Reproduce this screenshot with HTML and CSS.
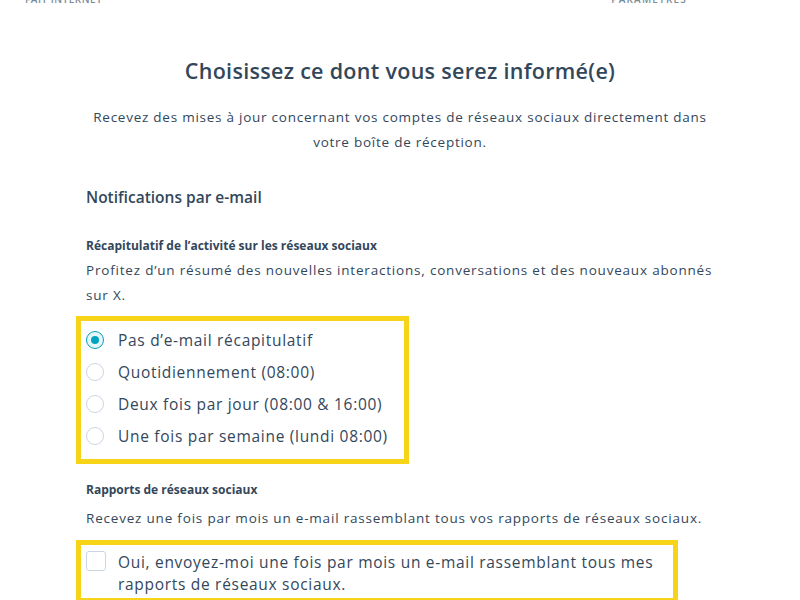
FILE: index.html
```html
<!DOCTYPE html>
<html lang="fr">
<head>
<meta charset="utf-8">
<title>Notifications</title>
<link rel="stylesheet" href="styles.css">
</head>
<body>
<header class="topbar">
  <span class="topbar-item">FAIT INTERNET</span>
  <span class="topbar-item topbar-right">PARAMÈTRES</span>
</header>
<main class="page">
  <h1 class="title">Choisissez ce dont vous serez informé(e)</h1>
  <p class="intro">Recevez des mises à jour concernant vos comptes de réseaux sociaux directement dans votre boîte de réception.</p>

  <h2 class="section-title">Notifications par e-mail</h2>

  <h3 class="group-title">Récapitulatif de l’activité sur les réseaux sociaux</h3>
  <p class="group-desc">Profitez d’un résumé des nouvelles interactions, conversations et des nouveaux abonnés sur X.</p>

  <div class="highlight radio-box">
    <label class="option"><span class="radio checked"></span><span>Pas d’e-mail récapitulatif</span></label>
    <label class="option"><span class="radio"></span><span>Quotidiennement (08:00)</span></label>
    <label class="option"><span class="radio"></span><span>Deux fois par jour (08:00 &amp; 16:00)</span></label>
    <label class="option"><span class="radio"></span><span>Une fois par semaine (lundi 08:00)</span></label>
  </div>

  <h3 class="group-title reports">Rapports de réseaux sociaux</h3>
  <p class="group-desc single">Recevez une fois par mois un e-mail rassemblant tous vos rapports de réseaux sociaux.</p>

  <div class="highlight check-box">
    <label class="check-option"><span class="checkbox"></span><span class="check-text">Oui, envoyez-moi une fois par mois un e-mail rassemblant tous mes rapports de réseaux sociaux.</span></label>
  </div>
</main>
</body>
</html>
```
FILE: styles.css
```css
* { box-sizing: border-box; }
html, body { margin: 0; padding: 0; background: #ffffff; }
body {
  font-family: "Open Sans", "Noto Sans", sans-serif;
  color: #33475b;
  overflow: hidden;
  height: 600px;
}
.topbar {
  height: 5px;
  overflow: hidden;
  display: flex;
  justify-content: space-between;
  padding: 0 113px 0 25px;
}
.topbar-item {
  display: block;
  font-size: 10px;
  line-height: 10px;
  margin-top: -6px;
  font-weight: 600;
  letter-spacing: 0.5px;
  color: #7c8b9a;
}
.topbar-right {
  letter-spacing: 1.2px;
}
.page {
  width: 628px;
  margin: 0 auto;
}
.title {
  margin: 54px 0 0;
  font-size: 21.5px;
  line-height: 24px;
  font-weight: 600;
  letter-spacing: 0.3px;
  text-align: center;
}
.intro {
  margin: 22px 0 0;
  font-size: 13.5px;
  line-height: 25px;
  letter-spacing: 0.75px;
  text-align: center;
  padding: 0 2px;
}
.section-title {
  margin: 30px 0 0;
  font-size: 15.5px;
  line-height: 24px;
  font-weight: 600;
}
.group-title {
  margin: 24px 0 0;
  font-size: 12px;
  line-height: 25px;
  font-weight: 700;
  letter-spacing: 0;
}
.group-desc {
  margin: 0;
  font-size: 13.5px;
  line-height: 25px;
  letter-spacing: 0.8px;
}
.highlight {
  border: 5px solid #f7d417;
}
.radio-box {
  display: inline-flex;
  flex-direction: column;
  margin: 8px 0 0 -10px;
  padding: 3px 16px 7px 5px;
}
.option {
  display: flex;
  align-items: center;
  gap: 14px;
  height: 32px;
  font-size: 15.5px;
  letter-spacing: 0.7px;
}
.radio {
  width: 18px;
  height: 18px;
  border-radius: 50%;
  border: 1.5px solid #cbd6e2;
  background: #ffffff;
  display: flex;
  align-items: center;
  justify-content: center;
}
.radio.checked {
  border-color: #00a4bd;
  background: #e5f5f8;
}
.radio.checked::after {
  content: "";
  width: 8px;
  height: 8px;
  border-radius: 50%;
  background: #00a4bd;
}
.reports {
  margin-top: 13px;
}
.group-desc.single {
  margin-top: 4px;
}
.check-box {
  margin: 9px 0 0 -10px;
  width: 602px;
  padding: 6px 10px 3px 5px;
}
.check-option {
  display: flex;
  align-items: flex-start;
  gap: 12px;
  font-size: 15.5px;
  line-height: 22px;
  letter-spacing: 0.7px;
}
.checkbox {
  flex: none;
  width: 20px;
  height: 20px;
  border: 1.5px solid #cbd6e2;
  border-radius: 3px;
  background: #ffffff;
}
.check-text {
  display: block;
}
```
